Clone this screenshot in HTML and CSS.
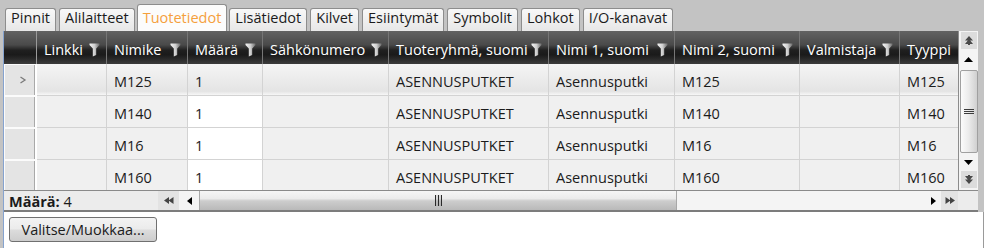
FILE: index.html
```html
<!DOCTYPE html>
<html lang="fi">
<head>
  <meta charset="UTF-8">
  <meta name="viewport" content="width=device-width, initial-scale=1.0">
  <title>Tuotetiedot</title>
  <link rel="stylesheet" href="styles.css">
</head>
<body>
  <svg class="defs" width="0" height="0">
    <defs>
      <linearGradient id="metal" x1="0" y1="0" x2="1" y2="0">
        <stop offset="0" stop-color="#f4f4f4"/>
        <stop offset="0.5" stop-color="#cfcfcf"/>
        <stop offset="1" stop-color="#6a6a6a"/>
      </linearGradient>
      <symbol id="funnel" viewBox="0 0 11 14">
        <path d="M0.5 0.5 H10.5 V2 L7.2 5.5 V12 L3.8 13.5 V5.5 L0.5 2 Z" fill="url(#metal)"/>
      </symbol>
    </defs>
  </svg>

  <div class="tabs">
    <div class="tab">Pinnit</div>
    <div class="tab">Alilaitteet</div>
    <div class="tab active">Tuotetiedot</div>
    <div class="tab">Lisätiedot</div>
    <div class="tab">Kilvet</div>
    <div class="tab">Esiintymät</div>
    <div class="tab">Symbolit</div>
    <div class="tab">Lohkot</div>
    <div class="tab">I/O-kanavat</div>
  </div>

  <div class="panel">
    <div class="grid">
      <div class="grid-top">
        <div class="viewport">
          <div class="row head">
            <div class="rh"></div>
            <div class="cell c-link"><span>Linkki</span><svg class="funnel"><use href="#funnel"/></svg></div>
            <div class="cell c-name"><span>Nimike</span><svg class="funnel"><use href="#funnel"/></svg></div>
            <div class="cell c-qty"><span>Määrä</span><svg class="funnel"><use href="#funnel"/></svg></div>
            <div class="cell c-elnum"><span>Sähkönumero</span><svg class="funnel"><use href="#funnel"/></svg></div>
            <div class="cell c-group"><span>Tuoteryhmä, suomi</span><svg class="funnel"><use href="#funnel"/></svg></div>
            <div class="cell c-name1"><span>Nimi 1, suomi</span><svg class="funnel"><use href="#funnel"/></svg></div>
            <div class="cell c-name2"><span>Nimi 2, suomi</span><svg class="funnel"><use href="#funnel"/></svg></div>
            <div class="cell c-maker"><span>Valmistaja</span><svg class="funnel"><use href="#funnel"/></svg></div>
            <div class="cell c-type"><span>Tyyppi</span><svg class="funnel"><use href="#funnel"/></svg></div>
          </div>

          <div class="row data current">
            <div class="rh"><svg class="chevron" width="8" height="8" viewBox="0 0 8 8"><path d="M1.5 1 L6 4 L1.5 7" fill="none" stroke="#7a7a7a" stroke-width="1.3"/></svg></div>
            <div class="cell c-link"></div>
            <div class="cell c-name">M125</div>
            <div class="cell c-qty">1</div>
            <div class="cell c-elnum"></div>
            <div class="cell c-group">ASENNUSPUTKET</div>
            <div class="cell c-name1">Asennusputki</div>
            <div class="cell c-name2">M125</div>
            <div class="cell c-maker"></div>
            <div class="cell c-type">M125</div>
          </div>
          <div class="row data">
            <div class="rh"></div>
            <div class="cell c-link"></div>
            <div class="cell c-name">M140</div>
            <div class="cell c-qty">1</div>
            <div class="cell c-elnum"></div>
            <div class="cell c-group">ASENNUSPUTKET</div>
            <div class="cell c-name1">Asennusputki</div>
            <div class="cell c-name2">M140</div>
            <div class="cell c-maker"></div>
            <div class="cell c-type">M140</div>
          </div>
          <div class="row data">
            <div class="rh"></div>
            <div class="cell c-link"></div>
            <div class="cell c-name">M16</div>
            <div class="cell c-qty">1</div>
            <div class="cell c-elnum"></div>
            <div class="cell c-group">ASENNUSPUTKET</div>
            <div class="cell c-name1">Asennusputki</div>
            <div class="cell c-name2">M16</div>
            <div class="cell c-maker"></div>
            <div class="cell c-type">M16</div>
          </div>
          <div class="row data">
            <div class="rh"></div>
            <div class="cell c-link"></div>
            <div class="cell c-name">M160</div>
            <div class="cell c-qty">1</div>
            <div class="cell c-elnum"></div>
            <div class="cell c-group">ASENNUSPUTKET</div>
            <div class="cell c-name1">Asennusputki</div>
            <div class="cell c-name2">M160</div>
            <div class="cell c-maker"></div>
            <div class="cell c-type">M160</div>
          </div>
        </div>

        <div class="vscroll">
          <div class="vs-page first">
            <svg width="8" height="9" viewBox="0 0 8 9"><path d="M4 0 L8 4.5 H0 Z M4 3 L8 8 H5 V9 H3 V8 H0 Z" fill="#4a4a4a"/></svg>
          </div>
          <div class="vs-arrow">
            <svg width="9" height="5" viewBox="0 0 9 5"><path d="M0 5 L4.5 0 L9 5 Z" fill="#000"/></svg>
          </div>
          <div class="vs-thumb">
            <svg width="10" height="5" viewBox="0 0 10 5"><path d="M0 0.5 H10 M0 2.5 H10 M0 4.5 H10" stroke="#3c3c3c" stroke-width="1"/></svg>
          </div>
          <div class="vs-arrow">
            <svg width="9" height="5" viewBox="0 0 9 5"><path d="M0 0 L4.5 5 L9 0 Z" fill="#000"/></svg>
          </div>
          <div class="vs-page">
            <svg width="8" height="9" viewBox="0 0 8 9"><path d="M4 9 L8 4.5 H0 Z M4 6 L8 1 H5 V0 H3 V1 H0 Z" fill="#4a4a4a"/></svg>
          </div>
        </div>
      </div>

      <div class="footer">
        <div class="count"><b>Määrä:</b> 4</div>
        <div class="hs-page">
          <svg width="10" height="7" viewBox="0 0 10 7"><path d="M0 3.5 L5 0 V7 Z M4.5 3.5 L9.5 0 V7 Z" fill="#444"/></svg>
        </div>
        <div class="hs-arrow">
          <svg width="5" height="8" viewBox="0 0 5 8"><path d="M5 0 V8 L0 4 Z" fill="#000"/></svg>
        </div>
        <div class="hs-thumb">
          <svg width="7" height="11" viewBox="0 0 7 11"><path d="M0.5 0 V11 M3.5 0 V11 M6.5 0 V11" stroke="#2a2a2a" stroke-width="1.2"/></svg>
        </div>
        <div class="hs-track"></div>
        <div class="hs-arrow right">
          <svg width="5" height="8" viewBox="0 0 5 8"><path d="M0 0 V8 L5 4 Z" fill="#000"/></svg>
        </div>
        <div class="hs-page right">
          <svg width="10" height="7" viewBox="0 0 10 7"><path d="M10 3.5 L5 0 V7 Z M5.5 3.5 L0.5 0 V7 Z" fill="#444"/></svg>
        </div>
      </div>
    </div>

    <div class="actions">
      <button class="btn">Valitse/Muokkaa...</button>
    </div>
  </div>
</body>
</html>
```

FILE: styles.css
```css
* {
  margin: 0;
  padding: 0;
  box-sizing: border-box;
}

body {
  width: 984px;
  height: 248px;
  overflow: hidden;
  background: #c3c3c3;
  font-family: "Open Sans", "Noto Sans", sans-serif;
  font-size: 14.5px;
  color: #1b1b1b;
}

.defs {
  display: block;
}

/* tabs */
.tabs {
  display: flex;
  align-items: flex-end;
  gap: 3px;
  height: 31px;
  padding-left: 5px;
}

.tab {
  height: 23px;
  padding: 0 5px 4px;
  line-height: 18px;
  white-space: nowrap;
  border: 1px solid #8d8d8d;
  border-bottom: none;
  border-radius: 3px 3px 0 0;
  background: linear-gradient(#f8f8f8, #e7e7e7);
}

.tab.active {
  height: 27px;
  padding: 4px 5px 4px;
  margin: 0 -1px;
  background: #fcfcfc;
  color: #f5a03c;
}

/* grid */
.panel {
  margin-left: 3px;
  border-left: 1px solid #86a3cf;
}

.grid {
  width: 974px;
  background: #ececec;
}

.grid-top {
  display: flex;
  height: 159px;
}

.viewport {
  width: 955px;
  overflow: hidden;
  border-right: 1px solid #8c8c8c;
}

.row {
  display: flex;
}

.rh, .cell {
  flex: none;
  white-space: nowrap;
  overflow: hidden;
}

.rh { width: 33px; }
.c-link { width: 70px; }
.c-name { width: 81px; }
.c-qty { width: 75px; }
.c-elnum { width: 126px; }
.c-group { width: 160px; }
.c-name1 { width: 126px; }
.c-name2 { width: 125px; }
.c-maker { width: 100px; }
.c-type { width: 100px; }

.head {
  height: 33px;
  color: #fff;
}

.head .rh, .head .cell {
  background: linear-gradient(#626262, #4a4a4a 42%, #202020 58%, #1a1a1a 72%, #3c3c3c);
  border-right: 1px solid #767676;
}

.head .rh {
  border-right-color: #9a9a9a;
}

.head .cell {
  display: flex;
  align-items: center;
  justify-content: space-between;
  padding: 4px 6px 0 7px;
  line-height: 29px;
}

.funnel {
  flex: none;
  width: 11px;
  height: 14px;
}

.data {
  height: 32px;
}

.data .cell {
  padding: 4px 7px 0;
  line-height: 27px;
  background: #f0f0f0;
  border-right: 1px solid #d3d3d3;
  border-bottom: 1px solid #d3d3d3;
}

.data .c-qty {
  background: #fff;
}

.data.current .cell {
  background: linear-gradient(#f5f5f5, #e4e4e4 88%, #f7f7f7);
}

.data .rh {
  display: flex;
  align-items: center;
  padding-left: 14px;
  background: #e4e4e4;
  border: 1px solid #fbfbfb;
  border-right: 2px solid #fff;
  box-shadow: inset -1px 0 #a9a9a9;
}

/* vertical scrollbar */
.vscroll {
  width: 19px;
  display: flex;
  flex-direction: column;
  align-items: center;
  background: #f4f4f4;
}

.vs-page {
  display: flex;
  align-items: center;
  justify-content: center;
  width: 16px;
  height: 17px;
  background: #dcdcdc;
}

.vs-page.first {
  margin-top: 1px;
}

.vs-arrow {
  display: flex;
  align-items: center;
  justify-content: center;
  width: 16px;
  height: 20px;
}

.vs-arrow + .vs-page {
  margin-top: -1px;
}

.vs-thumb {
  display: flex;
  align-items: center;
  justify-content: center;
  width: 18px;
  height: 83px;
  margin: 1px 0 -1px;
  border: 1px solid #a0a0a0;
  border-radius: 2px;
  background: linear-gradient(to right, #fbfbfb, #ececec 45%, #d0d0d0);
}

/* footer with horizontal scrollbar */
.footer {
  display: flex;
  height: 22px;
  border-top: 1px solid #8a8a8a;
  border-bottom: 2px solid #7c7c7c;
  background: #ececec;
}

.count {
  width: 154px;
  padding: 2px 0 0 5px;
  line-height: 17px;
}

.count b {
  font-weight: 700;
}

.hs-page, .hs-arrow {
  display: flex;
  align-items: center;
  justify-content: center;
}

.hs-page {
  width: 21px;
  background: #e3e3e3;
}

.hs-page.right {
  width: 17px;
}

.hs-arrow {
  width: 20px;
  background: #f4f4f4;
}

.hs-arrow.right {
  width: 16px;
}

.hs-thumb {
  display: flex;
  align-items: center;
  justify-content: center;
  width: 478px;
  border-left: 1px solid #a8a8a8;
  border-right: 1px solid #a8a8a8;
  background: linear-gradient(#f6f6f6, #ebebeb 40%, #cdcdcd 52%, #b9b9b9);
}

.hs-track {
  width: 248px;
  background: #f4f4f4;
}

/* bottom buttons */
.actions {
  height: 36px;
  padding: 5px 0 0 5px;
  background: #fff;
  border-right: 1px solid #9a9a9a;
}

.btn {
  width: 148px;
  height: 25px;
  border: 1px solid #707070;
  border-radius: 3px;
  background: linear-gradient(#f3f3f3, #ebebeb 48%, #dcdcdc 52%, #cdcdcd);
  font-family: "Open Sans", "Noto Sans", sans-serif;
  font-size: 14.5px;
  color: #1b1b1b;
}
```
